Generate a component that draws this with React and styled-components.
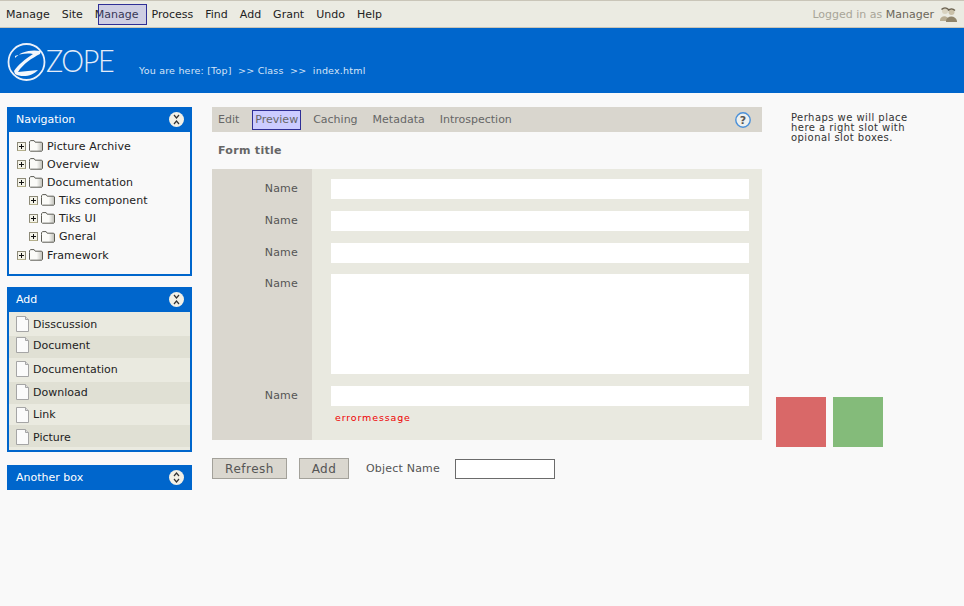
import styled, { createGlobalStyle } from 'styled-components';

const GlobalStyle = createGlobalStyle`
  html, body {
    margin: 0;
    padding: 0;
    background: #f9f9f9;
    font-family: "DejaVu Sans", Verdana, sans-serif;
    font-size: 11px;
    color: #222;
  }
`;

const Page = styled.div`
  width: 964px;
  height: 606px;
  overflow: hidden;
`;

const MenuBar = styled.div`
  height: 26px;
  display: flex;
  align-items: center;
  justify-content: space-between;
  background: #ebebe2;
  border-top: 1px solid #c9c5b8;
  border-bottom: 1px solid #c9c5b8;
  padding: 0 7px 0 6px;
`;

const Menu = styled.nav`
  display: flex;
  gap: 12px;
`;

const MenuItem = styled.a`
  position: relative;
  color: #222;
  ${p => p.$active && `
    margin-right: 1px;
    &::after {
      content: '';
      position: absolute;
      left: 3px;
      top: -4px;
      width: 47px;
      height: 19px;
      border: 1px solid #2f2f96;
      background: rgba(120, 120, 230, 0.25);
    }
  `}
`;

const Login = styled.div`
  display: flex;
  align-items: center;
  gap: 6px;
  color: #a8a598;
  b {
    font-weight: normal;
    color: #6b675a;
  }
`;

const Banner = styled.header`
  height: 65px;
  background: #0066cc;
  display: flex;
  align-items: flex-start;
  padding: 15px 0 0 7px;
  box-sizing: border-box;
`;

const Logo = styled.div`
  display: flex;
  align-items: center;
  width: 132px;
  height: 38px;
`;

const LogoText = styled.span`
  font-family: Lato, "Liberation Sans", sans-serif;
  font-weight: 300;
  font-size: 32px;
  color: #e4ecf8;
  letter-spacing: -1.5px;
  line-height: 38px;
  margin-top: -4px;
  transform: scaleX(0.9);
  transform-origin: left;
`;

const Crumbs = styled.div`
  color: #d5e4f7;
  font-size: 9.5px;
  letter-spacing: 0.2px;
  padding-top: 22px;
  white-space: pre;
`;

const Content = styled.div`
  display: flex;
  padding: 14px 0 0 7px;
`;

const Sidebar = styled.aside`
  width: 185px;
  margin-right: 20px;
  display: flex;
  flex-direction: column;
  gap: 11px;
`;

const Box = styled.section`
  background: #0066cc;
  padding: 0 2px ${p => (p.$closed ? '0' : '2px')};
  margin-top: ${p => p.$gap || 0}px;
`;

const BoxHeader = styled.div`
  height: 25px;
  display: flex;
  align-items: center;
  justify-content: space-between;
  padding: 0 6px 0 7px;
  color: #fff;
`;

const Tree = styled.ul`
  list-style: none;
  margin: 0;
  padding: 5px 0 10px;
  background: #f9f9f9;
`;

const TreeRow = styled.li`
  height: ${p => p.$height || 18}px;
  display: flex;
  align-items: center;
  gap: 3px;
  padding-left: ${p => (p.$depth ? 20 : 8)}px;
  letter-spacing: 0.1px;
  color: #222;
  span {
    margin-left: 1px;
  }
`;

const AddList = styled.ul`
  list-style: none;
  margin: 0;
  padding: 0 0 3px;
  background: #eaeae0;
`;

const AddRow = styled.li`
  box-sizing: border-box;
  height: ${p => p.$height}px;
  display: flex;
  align-items: center;
  gap: 4px;
  padding: ${p => p.$padTop}px 0 ${p => p.$padBottom}px 7px;
  background: ${p => (p.$odd ? '#e0e0d4' : '#eaeae0')};
`;

const Main = styled.main`
  width: 550px;
`;

const Tabs = styled.div`
  height: 25px;
  display: flex;
  align-items: center;
  background: #d9d6ce;
  padding: 0 11px 0 6px;
  gap: 15px;
`;

const Tab = styled.a`
  color: #666;
  ${p => p.$active && `
    background: #ccccff;
    border: 1px solid #2f2f96;
    padding: 2px;
    margin: 0 -3px 0 -2px;
    line-height: 14px;
  `}
`;

const HelpIcon = styled.svg`
  margin-left: auto;
`;

const FormTitle = styled.h2`
  margin: 0;
  height: 37px;
  line-height: 37px;
  padding-left: 6px;
  font-size: 11px;
  color: #666;
  letter-spacing: 0.3px;
`;

const Form = styled.form`
  background: #e9e9e0;
`;

const FormRow = styled.div`
  display: grid;
  grid-template-columns: 100px 1fr;
`;

const Label = styled.label`
  background: #dad7cf;
  text-align: right;
  padding: ${p => p.$top}px 14px 0 0;
  color: #555;
  letter-spacing: 0.2px;
`;

const Field = styled.div`
  padding: ${p => p.$top}px 13px ${p => p.$bottom}px 19px;
`;

const TextBox = styled.div`
  height: ${p => p.$height || 20}px;
  background: #fff;
`;

const ErrorText = styled.div`
  color: #ee0000;
  font-size: 9.5px;
  letter-spacing: 0.85px;
  padding: 6px 0 0 4px;
  height: 28px;
  box-sizing: border-box;
`;

const Actions = styled.div`
  display: flex;
  align-items: center;
  margin-top: 18px;
`;

const Button = styled.button`
  height: 21px;
  width: ${p => p.$width}px;
  margin-right: 12px;
  padding: 0;
  font: inherit;
  font-size: 12px;
  letter-spacing: 0.5px;
  color: #555;
  background: #dad7cf;
  border: 1px solid #a3a19a;
`;

const ObjectLabel = styled.span`
  margin: 0 15px 0 5px;
  color: #555;
  letter-spacing: 0.2px;
`;

const ObjectInput = styled.input`
  width: 100px;
  height: 20px;
  box-sizing: border-box;
  background: #fff;
  border: 1px solid #6b6b6b;
  padding: 0;
`;

const RightColumn = styled.aside`
  width: 180px;
  margin-left: 14px;
`;

const SlotNote = styled.p`
  margin: 0;
  padding: 6px 0 0 15px;
  width: 130px;
  font-size: 10px;
  line-height: 10px;
  letter-spacing: 0.45px;
  color: #333;
`;

const Swatches = styled.div`
  display: flex;
  gap: 7px;
  margin-top: 254px;
`;

const Swatch = styled.div`
  width: 50px;
  height: 50px;
  background: ${p => p.$color};
`;

const ToggleIcon = ({ open }) => (
  <svg width="15" height="15" viewBox="0 0 15 15">
    <circle cx="7.5" cy="7.5" r="7.5" fill="#f2f0e6" />
    {open ? (
      <path d="M5 6l2.500-3L10 6M5 9l2.500 3L10 9" fill="none" stroke="#333" strokeWidth="1.2" />
    ) : (
      <path d="M5 3l2.500 3L10 3M5 12l2.500-3L10 12" fill="none" stroke="#333" strokeWidth="1.2" />
    )}
  </svg>
);

const PlusIcon = () => (
  <svg width="9" height="9" viewBox="0 0 9 9">
    <rect x="0.5" y="0.5" width="8" height="8" fill="#f4f3e8" stroke="#8d8a78" />
    <path d="M.5 8.500h8" stroke="#b5b08c" />
    <path d="M2 4.500h5M4.500 2v5" stroke="#111" />
  </svg>
);

const FolderIcon = () => (
  <svg width="14" height="12" viewBox="0 0 14 12">
    <defs>
      <linearGradient id="folderFill" x1="0" x2="1" y1="0" y2="0">
        <stop offset="0.55" stopColor="#fbfbf8" />
        <stop offset="1" stopColor="#bdbdb6" />
      </linearGradient>
    </defs>
    <path d="M.5 3.500V1.800L1.500.6h3.600l1.100 1.600h6.500l.8.800v7.400l-.8.800H1.300l-.8-.8z" fill="url(#folderFill)" stroke="#5c5c54" />
  </svg>
);

const DocIcon = () => (
  <svg width="13" height="16" viewBox="0 0 13 16">
    <path d="M.5.500h9l3 3v12H.5z" fill="#fbfbfb" stroke="#a5a5a5" />
    <path d="M9.500.500v3h3" fill="#ddd" stroke="#a5a5a5" />
  </svg>
);

const UserIcon = () => (
  <svg width="17" height="16" viewBox="0 0 17 16">
    <circle cx="5" cy="5" r="3" fill="#d8d2bf" />
    <circle cx="11.500" cy="6" r="3" fill="#c9c0a8" />
    <path d="M0 14c.5-5 8-5 9 0v1H0z" fill="#b8ad93" />
    <path d="M6 15c.5-6 10-6 11 0v1H6z" fill="#8f846b" />
    <path d="M1.500 3.500c2-2 5-2 7 0M8 4.500c2-2 5-2 7 0" fill="none" stroke="#6b6250" strokeWidth="1.4" />
  </svg>
);

const ZopeMark = () => (
  <svg width="39" height="38" viewBox="0 0 39 38">
    <circle cx="19.500" cy="19" r="18" fill="none" stroke="#eaf0fa" strokeWidth="1.800" />
    <path d="M8 15c5-6 15-9 26-7l-1 3C25 15 16 21 11 29l20-2c-5 6-16 8-23 4l-1-3c4-6 11-12 19-17-7-1-13 0-18 2z" fill="#f4f7fc" />
  </svg>
);

const HelpGlyph = () => (
  <HelpIcon width="16" height="16" viewBox="0 0 16 16">
    <circle cx="8" cy="8" r="7.200" fill="#eef0ee" stroke="#4a90d9" strokeWidth="1.400" />
    <text x="8" y="12" textAnchor="middle" fontSize="11" fontWeight="bold" fontFamily="DejaVu Sans" fill="#555">?</text>
  </HelpIcon>
);

const menu = ['Manage', 'Site', 'Manage', 'Process', 'Find', 'Add', 'Grant', 'Undo', 'Help'];
const tree = [
  ['Picture Archive', 0, 18],
  ['Overview', 0, 18],
  ['Documentation', 0, 18],
  ['Tiks component', 1, 18],
  ['Tiks UI', 1, 18],
  ['Gneral', 1, 19],
  ['Framework', 0, 18],
];
// name, row height, padding top, padding bottom
const addItems = [
  ['Disscussion', 24, 0, 0],
  ['Document', 22, 0, 4],
  ['Documentation', 24, 0, 2],
  ['Download', 22, 0, 2],
  ['Link', 21, 0, 0],
  ['Picture', 22, 2, 0],
];
const tabs = ['Edit', 'Preview', 'Caching', 'Metadata', 'Introspection'];

const App = () => {
  return (
    <Page>
      <GlobalStyle />
      <MenuBar>
        <Menu>
          {menu.map((m, i) => (
            <MenuItem key={i} $active={i === 2}>{m}</MenuItem>
          ))}
        </Menu>
        <Login>
          <span>Logged in as <b>Manager</b></span>
          <UserIcon />
        </Login>
      </MenuBar>
      <Banner>
        <Logo>
          <ZopeMark />
          <LogoText>ZOPE</LogoText>
        </Logo>
        <Crumbs>You are here: [Top]  &gt;&gt; Class  &gt;&gt;  index.html</Crumbs>
      </Banner>
      <Content>
        <Sidebar>
          <Box>
            <BoxHeader>Navigation <ToggleIcon /></BoxHeader>
            <Tree>
              {tree.map(([name, depth, height]) => (
                <TreeRow key={name} $depth={depth} $height={height}>
                  <PlusIcon />
                  <FolderIcon />
                  <span>{name}</span>
                </TreeRow>
              ))}
            </Tree>
          </Box>
          <Box>
            <BoxHeader>Add <ToggleIcon /></BoxHeader>
            <AddList>
              {addItems.map(([name, height, padTop, padBottom], i) => (
                <AddRow key={name} $odd={i % 2 === 1} $height={height} $padTop={padTop} $padBottom={padBottom}>
                  <DocIcon />
                  {name}
                </AddRow>
              ))}
            </AddList>
          </Box>
          <Box $closed $gap={2}>
            <BoxHeader>Another box <ToggleIcon open /></BoxHeader>
          </Box>
        </Sidebar>
        <Main>
          <Tabs>
            {tabs.map(t => (
              <Tab key={t} $active={t === 'Preview'}>{t}</Tab>
            ))}
            <HelpGlyph />
          </Tabs>
          <FormTitle>Form title</FormTitle>
          <Form>
            <FormRow>
              <Label $top={13}>Name</Label>
              <Field $top={10} $bottom={12}><TextBox /></Field>
            </FormRow>
            <FormRow>
              <Label $top={3}>Name</Label>
              <Field $top={0} $bottom={12}><TextBox /></Field>
            </FormRow>
            <FormRow>
              <Label $top={3}>Name</Label>
              <Field $top={0} $bottom={11}><TextBox /></Field>
            </FormRow>
            <FormRow>
              <Label $top={3}>Name</Label>
              <Field $top={0} $bottom={12}><TextBox $height={100} /></Field>
            </FormRow>
            <FormRow>
              <Label $top={3}>Name</Label>
              <Field $top={0} $bottom={6}>
                <TextBox />
                <ErrorText>errormessage</ErrorText>
              </Field>
            </FormRow>
          </Form>
          <Actions>
            <Button type="button" $width={75}>Refresh</Button>
            <Button type="button" $width={50}>Add</Button>
            <ObjectLabel>Object Name</ObjectLabel>
            <ObjectInput />
          </Actions>
        </Main>
        <RightColumn>
          <SlotNote>Perhaps we will place here a right slot with opional slot boxes.</SlotNote>
          <Swatches>
            <Swatch $color="#d96868" />
            <Swatch $color="#84bb7a" />
          </Swatches>
        </RightColumn>
      </Content>
    </Page>
  );
};

export default App;
